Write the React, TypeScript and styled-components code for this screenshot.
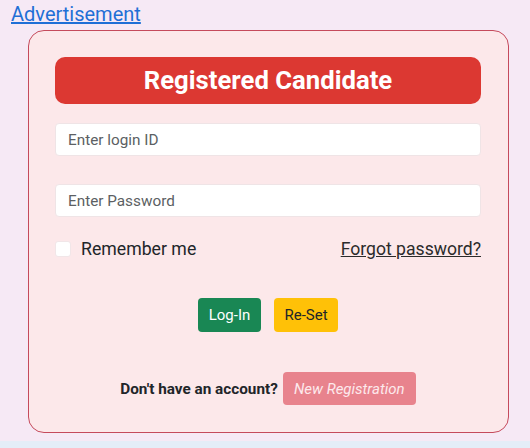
import React from "react";
import styled, { createGlobalStyle } from "styled-components";

const Global = createGlobalStyle`
  html, body { margin: 0; padding: 0; }
  body {
    background: #f6e9f5;
    font-family: Roboto, "Noto Sans", Arial, sans-serif;
    color: #212529;
    overflow: hidden;
  }
  * { box-sizing: border-box; }
`;

const Page = styled.div`
  display: flex;
  flex-direction: column;
  width: 530px;
  height: 448px;
`;

const AdLink = styled.a`
  display: block;
  height: 30px;
  padding-left: 11px;
  font-size: 20px;
  line-height: 28px;
  color: #1f6fd6;
  text-decoration: underline;
`;

const Card = styled.form`
  margin-left: 28px;
  width: 481px;
  border: 1px solid #c54a5c;
  border-radius: 16px;
  background: #fce8ea;
  padding: 26px 27px 27px 26px;
  display: flex;
  flex-direction: column;
`;

const Header = styled.h2`
  margin: 0;
  height: 47px;
  border-radius: 10px;
  background: #dc3832;
  color: #ffffff;
  font-size: 25.7px;
  font-weight: 700;
  line-height: 47px;
  text-align: center;
`;

const Field = styled.input<{ $gap: number }>`
  margin-top: ${(p) => p.$gap}px;
  height: 33px;
  width: 100%;
  border: 1px solid #efe4e6;
  border-radius: 4px;
  background: #ffffff;
  padding: 0 12px;
  font-family: Roboto, sans-serif;
  font-size: 15.3px;
  color: #212529;
  &::placeholder { color: #5c5f63; }
`;

const OptionsRow = styled.div`
  margin-top: 20px;
  height: 24px;
  display: flex;
  align-items: center;
  justify-content: space-between;
`;

const RememberLabel = styled.label`
  display: flex;
  align-items: center;
  gap: 10px;
  font-size: 17.7px;
  color: #212529;
`;

const Check = styled.span`
  width: 16px;
  height: 16px;
  border-radius: 3px;
  background: #ffffff;
  border: 1px solid #f1e6e8;
`;

const Forgot = styled.a`
  font-size: 17.6px;
  color: #2b2b2b;
  text-decoration: underline;
`;

const ButtonRow = styled.div`
  margin-top: 37px;
  display: flex;
  justify-content: center;
  gap: 13px;
`;

const Btn = styled.button<{ $bg: string; $fg: string; $w: number }>`
  width: ${(p) => p.$w}px;
  height: 34px;
  border: none;
  border-radius: 4px;
  background: ${(p) => p.$bg};
  color: ${(p) => p.$fg};
  font-family: Roboto, sans-serif;
  font-size: 15px;
  padding: 0;
`;

const SignupRow = styled.div`
  margin-top: 40px;
  display: flex;
  justify-content: center;
  align-items: center;
  gap: 5px;
`;

const SignupText = styled.span`
  font-size: 15.3px;
  font-weight: 700;
  color: #212529;
`;

const RegisterBtn = styled.button`
  width: 133px;
  height: 33px;
  border: none;
  border-radius: 4px;
  background: #e8838d;
  color: #fde9ec;
  font-family: Roboto, sans-serif;
  font-size: 15px;
  font-style: italic;
  padding: 0;
`;

const Footer = styled.div`
  margin-top: 8px;
  flex: 1;
  background: #e4edf8;
`;

export default function App() {
  return (
    <Page>
      <Global />
      <AdLink href="#">Advertisement</AdLink>
      <Card onSubmit={(e) => e.preventDefault()}>
        <Header>Registered Candidate</Header>
        <Field $gap={19} placeholder="Enter login ID" />
        <Field $gap={28} type="password" placeholder="Enter Password" />
        <OptionsRow>
          <RememberLabel>
            <Check />
            Remember me
          </RememberLabel>
          <Forgot href="#">Forgot password?</Forgot>
        </OptionsRow>
        <ButtonRow>
          <Btn type="button" $bg="#198754" $fg="#ffffff" $w={63}>Log-In</Btn>
          <Btn type="button" $bg="#ffc107" $fg="#212529" $w={64}>Re-Set</Btn>
        </ButtonRow>
        <SignupRow>
          <SignupText>Don't have an account?</SignupText>
          <RegisterBtn type="button">New Registration</RegisterBtn>
        </SignupRow>
      </Card>
      <Footer />
    </Page>
  );
}
